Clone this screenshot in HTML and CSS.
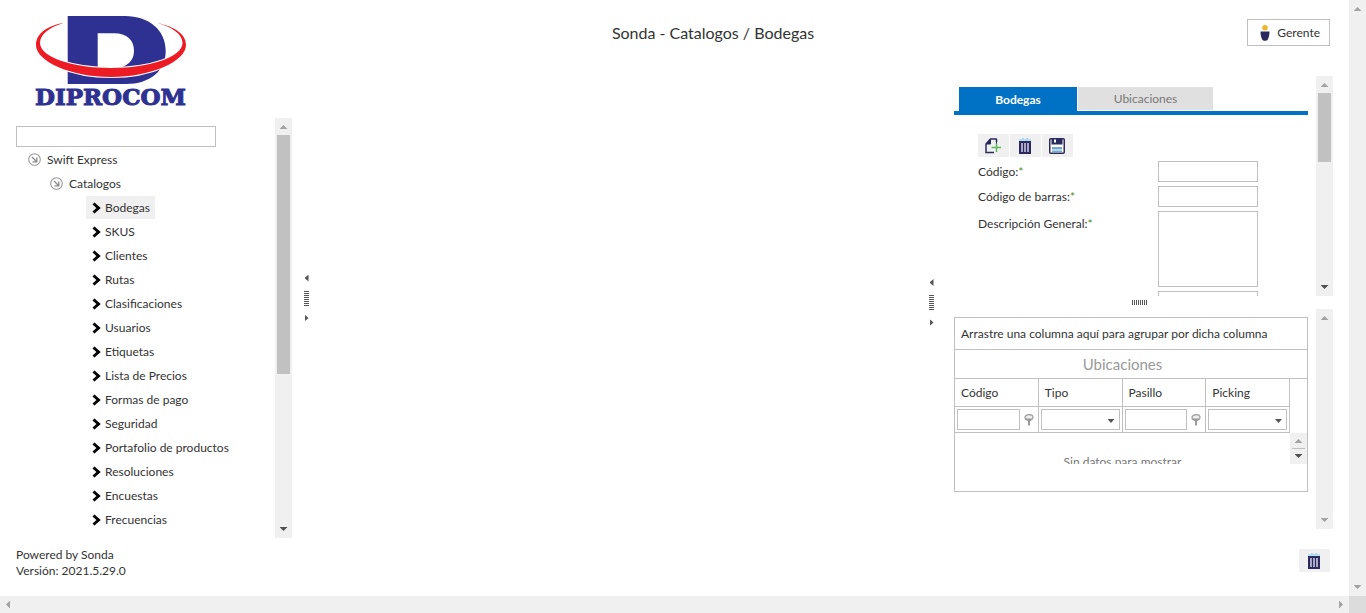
FILE: index.html
```html
<!DOCTYPE html>
<html lang="es">
<head>
<meta charset="utf-8">
<title>Sonda - Catalogos / Bodegas</title>
<link rel="stylesheet" href="styles.css">
</head>
<body>
<svg class="defs" aria-hidden="true">
  <symbol id="chevron" viewBox="0 0 10 12"><path d="M1.500 1.500 6.500 6 1.500 10.500" fill="none" stroke="#000" stroke-width="3"/></symbol>
  <symbol id="expanded" viewBox="0 0 13 13"><circle cx="6.5" cy="6.5" r="5.8" fill="none" stroke="#999" stroke-width="1.1"/><path d="M4 4l4.5 4.5M8.8 4.5v4.3H4.5" fill="none" stroke="#8a8a8a" stroke-width="1.3"/></symbol>
  <symbol id="trash" viewBox="0 0 16 16"><path d="M2 2h12M5 .8h2M9 .8h2" stroke="#a9d8f0" stroke-width="1.6"/><path d="M2 3h12v13H2z" fill="#2b2a5f"/><path d="M4 5h2v9H4zM7 5h2v9H7zM10 5h2v9h-2z" fill="#aba6c6"/></symbol>
  <symbol id="pin" viewBox="0 0 10 12"><ellipse cx="5" cy="3.5" rx="4" ry="2.8" fill="#eee" stroke="#999" stroke-width="1.2"/><path d="M1.2 4.5h7.6L6 7v4l-1 1-1-1V7z" fill="#999"/></symbol>
</svg>
<div class="window">
  <main class="app">
    <aside class="sidebar">
      <svg class="logo" viewBox="36 15 151 93" role="img" aria-label="Diprocom">
        <path d="M67.7 16H125C149 16 165.7 30 165.7 51C165.7 71 150 84 126 84H67.7zM97.7 33.3V69H115C127 67 134 61 134 51C134 40 127 33.3 114 33.3z" fill="#2e3192" fill-rule="evenodd"/>
        <path class="ring" d="M63.5 23C46 26 36 34 36 45C36 61 70 77 111 77C152 77 186 61 186 45C186 34 175 27 157.500 23C172 27 182.500 34 182.500 43C182.500 57 150 68 111 68C72 68 40 57 40 43C40 34 50 27 63.500 23z"/>
        <text x="35" y="105" class="logo-text">DIPROCOM</text>
      </svg>
      <div class="tree-pane">
        <div class="tree-view">
          <input class="box search" type="text" aria-label="Buscar">
          <ul class="tree root">
            <li><a href="#"><svg class="node"><use href="#expanded"/></svg>Swift Express</a>
              <ul class="tree branch">
                <li><a href="#"><svg class="node"><use href="#expanded"/></svg>Catalogos</a>
                  <ul class="tree leaves">
                    <li><a class="selected" href="#"><svg class="chev"><use href="#chevron"/></svg>Bodegas</a></li>
                    <li><a href="#"><svg class="chev"><use href="#chevron"/></svg>SKUS</a></li>
                    <li><a href="#"><svg class="chev"><use href="#chevron"/></svg>Clientes</a></li>
                    <li><a href="#"><svg class="chev"><use href="#chevron"/></svg>Rutas</a></li>
                    <li><a href="#"><svg class="chev"><use href="#chevron"/></svg>Clasificaciones</a></li>
                    <li><a href="#"><svg class="chev"><use href="#chevron"/></svg>Usuarios</a></li>
                    <li><a href="#"><svg class="chev"><use href="#chevron"/></svg>Etiquetas</a></li>
                    <li><a href="#"><svg class="chev"><use href="#chevron"/></svg>Lista de Precios</a></li>
                    <li><a href="#"><svg class="chev"><use href="#chevron"/></svg>Formas de pago</a></li>
                    <li><a href="#"><svg class="chev"><use href="#chevron"/></svg>Seguridad</a></li>
                    <li><a href="#"><svg class="chev"><use href="#chevron"/></svg>Portafolio de productos</a></li>
                    <li><a href="#"><svg class="chev"><use href="#chevron"/></svg>Resoluciones</a></li>
                    <li><a href="#"><svg class="chev"><use href="#chevron"/></svg>Encuestas</a></li>
                    <li><a href="#"><svg class="chev"><use href="#chevron"/></svg>Frecuencias</a></li>
                    <li><a href="#"><svg class="chev"><use href="#chevron"/></svg></a></li>
                  </ul>
                </li>
              </ul>
            </li>
          </ul>
        </div>
        <div class="scroll"><i class="up"></i><div class="track"><div class="thumb tree-thumb"></div></div><i class="down on"></i></div>
      </div>
    </aside>

    <section class="content">
      <header class="header">
        <h1>Sonda - Catalogos / Bodegas</h1>
        <div class="user">
          <button class="user-button" type="button"><svg class="person" viewBox="0 0 10 16"><circle cx="5" cy="2.700" r="2.700" fill="#f0b323"/><path d="M.5 6.500h9c0 3-.5 6-2 8.500-.5 1-4.500 1-5 0-1.500-2.500-2-5.500-2-8.500z" fill="#2b2a5f"/></svg>Gerente</button>
        </div>
      </header>
      <div class="work">
        <div class="splitter first"><i class="left"></i><span class="grip"></span><i class="right"></i></div>
        <div class="blank"></div>
        <div class="splitter"><i class="left"></i><span class="grip"></span><i class="right"></i></div>
        <div class="detail">
          <section class="pane">
            <div class="pane-view form-view">
              <div class="tabs">
                <button class="tab active" type="button">Bodegas</button>
                <button class="tab second" type="button">Ubicaciones</button>
              </div>
              <div class="form">
                <div class="toolbar">
                  <button class="tool" type="button" aria-label="Nuevo"><svg viewBox="0 0 16 16"><path d="M11.500 4V1.500Q11.500 1 11 1H5.500L1 6v8.500h8" fill="none" stroke="#2b2a5f" stroke-width="1.500"/><path d="M11.500 3v4M1 6l4.500-5v5z" fill="#2b2a5f" stroke="#2b2a5f" stroke-width="1"/><path d="M6.500 9.500H16M11.500 5.500v8.500" stroke="#5cb85c" stroke-width="1.500"/></svg></button>
                  <button class="tool" type="button" aria-label="Eliminar"><svg><use href="#trash"/></svg></button>
                  <button class="tool" type="button" aria-label="Guardar"><svg viewBox="0 0 16 16"><rect x=".75" y=".75" width="14.500" height="14.500" rx="1" fill="#fff" stroke="#2b2a5f" stroke-width="1.500"/><path d="M2.500 1h11v5.500h-11z" fill="#2b2a5f"/><path d="M5 1.500h2v3H5z" fill="#fff"/><path d="M3 9h10v2.500H3zM3 12.500h10V14H3z" fill="#72a9d0"/></svg></button>
                </div>
                <div class="row"><label for="codigo">Código:<b>*</b></label><input class="box" id="codigo" type="text"></div>
                <div class="row"><label for="barras">Código de barras:<b>*</b></label><input class="box" id="barras" type="text"></div>
                <div class="row"><label class="tall" for="descripcion">Descripción General:<b>*</b></label><textarea class="box" id="descripcion"></textarea></div>
                <div class="row"><span></span><input class="box" type="text" aria-label="Campo adicional"></div>
              </div>
            </div>
            <div class="scroll"><i class="up"></i><div class="track"><div class="thumb form-thumb"></div></div><i class="down on"></i></div>
          </section>
          <div class="hsplitter"><span class="grip across"></span></div>
          <section class="pane">
            <div class="pane-view grid-view">
              <div class="grid">
                <div class="group">Arrastre una columna aquí para agrupar por dicha columna</div>
                <h2>Ubicaciones</h2>
                <table>
                  <thead>
                    <tr><th>Código</th><th>Tipo</th><th>Pasillo</th><th>Picking</th></tr>
                    <tr class="filters">
                      <td><div class="filter"><input class="box" type="text" aria-label="Filtrar Código"><svg><use href="#pin"/></svg></div></td>
                      <td><div class="filter combo"><select class="box" aria-label="Filtrar Tipo"><option></option></select></div></td>
                      <td><div class="filter"><input class="box" type="text" aria-label="Filtrar Pasillo"><svg><use href="#pin"/></svg></div></td>
                      <td><div class="filter combo"><select class="box" aria-label="Filtrar Picking"><option></option></select></div></td>
                    </tr>
                  </thead>
                </table>
                <div class="rows">
                  <div class="empty">Sin datos para mostrar</div>
                  <div class="scroll mini"><i class="up"></i><i class="down on"></i></div>
                </div>
              </div>
            </div>
            <div class="scroll"><i class="up"></i><div class="track"></div><i class="down"></i></div>
          </section>
        </div>
      </div>
    </section>

    <footer class="footer">
      <div>Powered by Sonda<br>Versión: 2021.5.29.0</div>
      <button class="tool" type="button" aria-label="Vaciar"><svg><use href="#trash"/></svg></button>
    </footer>
  </main>
  <div class="scroll"><i class="up"></i><div class="track"></div><i class="down"></i></div>
  <div class="scroll horizontal"><i class="left"></i><div class="track"></div><i class="right"></i></div>
  <div class="corner"></div>
</div>
</body>
</html>
```

FILE: styles.css
```css
* { box-sizing: border-box; }
body { margin: 0; font: 12px/16px Lato, "Open Sans", sans-serif; color: #333; background: #fff; }
button, input, select, textarea { font: inherit; color: inherit; border-radius: 0; }
a { color: inherit; text-decoration: none; }
svg { flex: none; display: block; }
.defs { position: absolute; width: 0; height: 0; }

.window { display: grid; grid-template: minmax(0, 1fr) 17px / minmax(0, 1fr) 17px; height: 100vh; }
.app { display: grid; grid-template: minmax(0, 1fr) auto / 276px minmax(0, 1fr); padding: 0 16px; min-height: 0; }
.box { border: 1px solid #c0c0c0; background: #fff; height: 21px; width: 100px; padding: 1px 3px; margin: 0; outline: 0; }

/* Scrollbars and arrows */
.scroll { flex: none; width: 17px; background: #f0f0f0; display: flex; flex-direction: column; align-items: center; justify-content: space-between; padding: 7px 0; }
.track { flex: 1; width: 13px; padding: 6px 0; min-height: 0; }
.thumb { background: #c1c1c1; }
.tree-thumb { height: 62%; }
.form-thumb { height: 37%; }
.horizontal { width: auto; flex-direction: row; padding: 0 6px; }
.corner { background: #dcdcdc; }
.up, .down { width: 8px; height: 4px; background: #a3a3a3; }
.up { clip-path: polygon(50% 0, 100% 100%, 0 100%); }
.down { clip-path: polygon(0 0, 100% 0, 50% 100%); }
.left, .right { width: 4px; height: 8px; background: #a3a3a3; }
.left { clip-path: polygon(100% 0, 100% 100%, 0 50%); }
.right { clip-path: polygon(0 0, 100% 50%, 0 100%); }
.on { background: #505050; }

/* Sidebar */
.sidebar { display: flex; flex-direction: column; min-height: 0; }
.logo { width: 151px; height: 93px; margin: 15px 20px 10px; overflow: visible; }
.logo-text { font: bold 23px "DejaVu Serif", serif; fill: #2e3192; stroke: #2e3192; stroke-width: 1px; }
.ring { fill: #ed1c24; stroke: #fff; stroke-width: 2px; paint-order: stroke; }
.tree-pane { flex: 1; display: flex; min-height: 0; }
.tree-view { flex: 1; overflow: hidden; padding-top: 8px; }
.search { display: block; width: 200px; margin-bottom: 1px; }
.tree { list-style: none; margin: 0; padding: 0; }
.root { padding-left: 12px; }
.branch { padding-left: 22px; }
.leaves { padding-left: 36px; }
.tree a { display: inline-flex; align-items: center; height: 23px; margin-bottom: 1px; padding-right: 5px; vertical-align: top; }
.node { width: 13px; height: 13px; margin-right: 6px; }
.leaves a { padding-left: 6px; }
.chev { width: 10px; height: 12px; margin-right: 3px; }
.selected { background: #f0f0f0; }

/* Header */
.content { display: flex; flex-direction: column; min-height: 0; min-width: 0; }
.header { display: flex; height: 76px; padding: 19px 3px 0 0; align-items: flex-start; }
h1 { flex: 1; margin: 0; font-size: 16px; line-height: 28px; font-weight: 400; text-align: center; }
.user { width: 196px; display: flex; justify-content: flex-end; }
.user-button { display: flex; align-items: center; gap: 7px; height: 27px; padding: 0 9px 0 12px; border: 1px solid #c0c0c0; background: #fff; }
.person { width: 10px; height: 16px; }

/* Split panes */
.work { flex: 1; display: flex; min-height: 0; padding-bottom: 9px; }
.blank { flex: 1; }
.splitter { width: 29px; display: flex; flex-direction: column; align-items: center; justify-content: center; gap: 9px; }
.splitter.first { margin-bottom: 9px; }
.splitter i { background: #555; height: 7px; }
.grip { width: 5px; height: 15px; background: repeating-linear-gradient(#555 0 1px, #fff 1px 2px); }
.across { width: 15px; height: 5px; background: repeating-linear-gradient(90deg, #555 0 1px, #fff 1px 2px); }
.detail { width: 387px; display: flex; flex-direction: column; margin-right: 0; }
.hsplitter { height: 13px; display: flex; align-items: center; justify-content: center; }
.pane { flex: 1; display: flex; min-height: 0; }
.pane-view { flex: 1; overflow: hidden; padding: 0 8px; }

/* Form */
.form-view { padding-top: 11px; }
.tabs { display: flex; gap: 1px; padding-left: 5px; border-bottom: 4px solid #0072c6; }
.tab { border: 0; width: 118px; height: 24px; padding: 1px 0 0; background: #e0e0e0; color: #777; }
.second { width: 135px; height: 23px; }
.active { background: #0072c6; color: #fff; font-weight: 700; }
.form { padding: 19px 24px 0; }
.toolbar { display: flex; gap: 1px; margin-bottom: 4px; }
.tool { width: 31px; height: 23px; padding: 0 2px 0 0; border: 0; background: #f0f0f0; display: flex; align-items: center; justify-content: center; }
.tool svg { width: 16px; height: 16px; }
.row { display: grid; grid-template-columns: 180px auto; justify-content: start; margin-bottom: 4px; line-height: 21px; }
.row textarea { height: 76px; display: block; resize: none; }
.row b { font-weight: 400; color: #4b8a2a; }
.tall { padding-top: 2px; }

/* Data grid */
.grid-view { padding-top: 8px; }
.grid { border: 1px solid #c0c0c0; padding-bottom: 27px; }
.group { padding: 8px 6px 7px; border-bottom: 1px solid #c0c0c0; }
h2 { margin: 0; font-size: 15px; line-height: 28px; font-weight: 400; color: #999; text-align: center; padding-right: 17px; border-bottom: 1px solid #c0c0c0; }
table { border-collapse: separate; border-spacing: 0; table-layout: fixed; width: calc(100% - 17px); }
th, td { border: solid #c0c0c0; border-width: 0 1px 1px 0; padding: 0; }
th { height: 28px; padding-left: 6px; font-weight: 400; text-align: left; }
td { height: 26px; }
.filter { display: flex; align-items: center; gap: 4px; padding: 0 4px 0 2px; position: relative; }
.filter .box { flex: 1; width: 0; }
.filter svg { width: 10px; height: 12px; }
.combo { padding-right: 2px; }
.combo select { appearance: none; }
.combo::after { content: ""; position: absolute; right: 7px; top: 10px; width: 7px; height: 4px; background: #555; clip-path: polygon(0 0, 100% 0, 50% 100%); }
.rows { display: flex; height: 31px; overflow: hidden; }
.empty { flex: 1; padding-top: 21px; text-align: center; color: #777; }
.mini { padding: 6px 0; background: linear-gradient(#c0c0c0, #c0c0c0) center / 13px 1px no-repeat #f0f0f0; }

.footer { grid-column: 1 / -1; display: flex; justify-content: space-between; align-items: flex-start; padding: 9px 3px 17px 0; }
.footer .tool { margin-top: 2px; }
```
